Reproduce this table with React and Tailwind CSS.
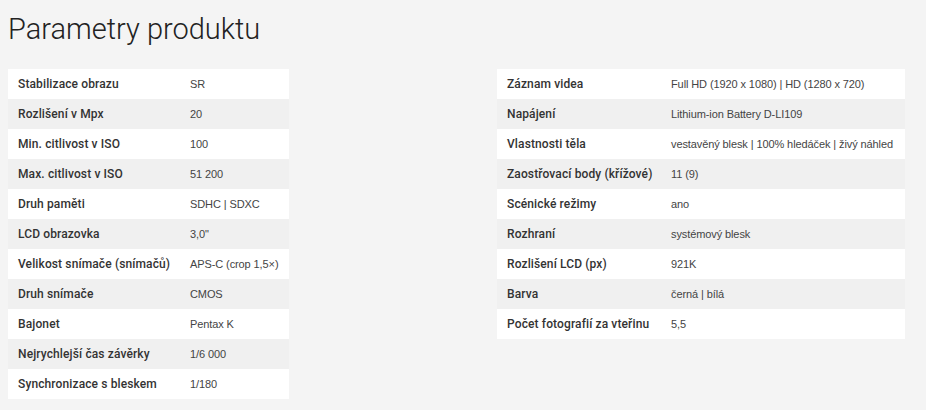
const LEFT = [
  ['Stabilizace obrazu', 'SR'],
  ['Rozlišení v Mpx', '20'],
  ['Min. citlivost v ISO', '100'],
  ['Max. citlivost v ISO', '51 200'],
  ['Druh paměti', 'SDHC | SDXC'],
  ['LCD obrazovka', '3,0"'],
  ['Velikost snímače (snímačů)', 'APS-C (crop 1,5×)'],
  ['Druh snímače', 'CMOS'],
  ['Bajonet', 'Pentax K'],
  ['Nejrychlejší čas závěrky', '1/6 000'],
  ['Synchronizace s bleskem', '1/180'],
]

const RIGHT = [
  ['Záznam videa', 'Full HD (1920 x 1080) | HD (1280 x 720)'],
  ['Napájení', 'Lithium-ion Battery D-LI109'],
  ['Vlastnosti těla', 'vestavěný blesk | 100% hledáček | živý náhled'],
  ['Zaostřovací body (křížové)', '11 (9)'],
  ['Scénické režimy', 'ano'],
  ['Rozhraní', 'systémový blesk'],
  ['Rozlišení LCD (px)', '921K'],
  ['Barva', 'černá | bílá'],
  ['Počet fotografií za vteřinu', '5,5'],
]

export default function App() {
  return (
    <div className="min-h-[410px] bg-[#f4f4f4] px-2 pt-[9px]">
      <h1 className="font-['Roboto',sans-serif] font-light text-[29px] leading-[40px] text-[#222]">
        Parametry produktu
      </h1>
      <div className="mt-5 flex items-start gap-[208px]">
        <SpecTable rows={LEFT} width="w-[281px]" labelWidth="w-[182px]" />
        <SpecTable rows={RIGHT} width="w-[408px]" labelWidth="w-[174px]" />
      </div>
    </div>
  )
}

function SpecTable({ rows, width, labelWidth }) {
  return (
    <div className={`${width} flex flex-col`}>
      {rows.map(([label, value], i) => (
        <div
          key={label}
          className={`flex h-[30px] items-center ${i % 2 === 0 ? 'bg-white' : 'bg-[#f0f0f0]'}`}
        >
          <span className={`${labelWidth} shrink-0 pl-[10px] font-['Roboto',sans-serif] font-medium text-[12px] tracking-[0.12px] text-[#333]`}>
            {label}
          </span>
          <span className="font-['Liberation_Sans',Arial,sans-serif] text-[11px] tracking-[-0.1px] text-[#444] whitespace-nowrap">
            {value}
          </span>
        </div>
      ))}
    </div>
  )
}
